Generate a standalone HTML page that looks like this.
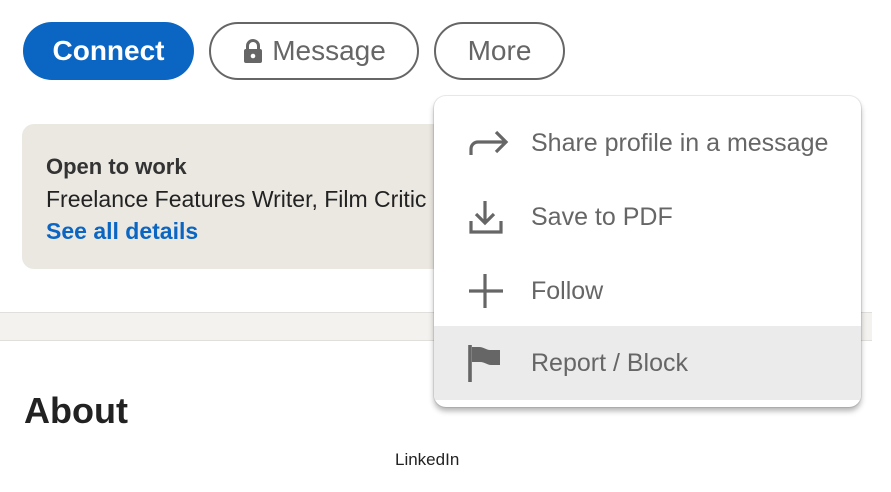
<!DOCTYPE html>
<html><head><meta charset="utf-8"><style>
*{margin:0;padding:0;box-sizing:border-box}
body{width:891px;height:492px;background:#fff;position:relative;overflow:hidden;font-family:"Liberation Sans",sans-serif}
.btn{position:absolute;top:22px;height:58px;border-radius:29px;font-size:28px;display:flex;align-items:center;justify-content:center}
.c{left:23px;width:171px;background:#0a66c2;color:#fff;font-weight:bold}
.m{left:209px;width:210px;border:2px solid #666;color:#666}
.mo{left:434px;width:131px;border:2px solid #666;color:#666}
.card{position:absolute;left:22px;top:124px;width:430px;height:145px;background:#ebe8e2;border-radius:12px;padding:27px 0 0 24px;font-size:23px;color:#222;line-height:32px;white-space:nowrap;overflow:hidden}
.band{position:absolute;left:0;top:312px;width:872px;height:29px;background:#f3f2ef;border-top:1px solid #e0dfdc;border-bottom:1px solid #e0dfdc}
.about{position:absolute;left:24px;top:390px;font-size:36px;font-weight:bold;color:#222}
.li{position:absolute;left:395px;top:450px;font-size:17px;color:#222}
.dd{position:absolute;left:434px;top:96px;width:427px;height:311px;background:#fff;border-radius:12px;box-shadow:0 4px 6px rgba(0,0,0,.3),0 0 0 1px rgba(0,0,0,.08);overflow:hidden}
.it{position:absolute;left:0;width:427px;height:74px;display:flex;align-items:center;font-size:25px;color:#666}
.it span{position:absolute;left:97px}
.it svg{position:absolute;left:34px}
</style></head><body>
<div class="btn c">Connect</div>
<div class="btn m"><svg width="22" height="26" viewBox="0 0 22 26" style="margin-right:8px"><path d="M5.5 12V8a5.5 5.5 0 0111 0v4" fill="none" stroke="#666" stroke-width="3"/><rect x="2" y="11" width="18" height="14" rx="2" fill="#666"/><circle cx="11" cy="18" r="2.3" fill="#fff"/></svg>Message</div>
<div class="btn mo">More</div>
<div class="card"><div style="font-weight:bold;color:#333;font-size:22px">Open to work</div><div>Freelance Features Writer, Film Critic</div><div style="color:#0a66c2;font-weight:bold">See all details</div></div>
<div class="band"></div>
<div class="about">About</div>
<div class="li">LinkedIn</div>
<div class="dd">
<div class="it" style="top:10px"><svg width="42" height="32" viewBox="0 0 42 32"><path d="M3 28v-6a7 7 0 017-7h28M28 5l10 10-10 10" fill="none" stroke="#666" stroke-width="3.2"/></svg><span>Share profile in a message</span></div>
<div class="it" style="top:84px"><svg width="36" height="36" viewBox="0 0 36 36"><path d="M17 2v22M8 15l9 9 9-9M3 22v11h30V22" fill="none" stroke="#666" stroke-width="3.2"/></svg><span>Save to PDF</span></div>
<div class="it" style="top:158px"><svg width="36" height="36" viewBox="0 0 36 36"><path d="M17 1v34M1 18h34" fill="none" stroke="#666" stroke-width="3.2"/></svg><span>Follow</span></div>
<div class="it" style="top:230px;height:74px;background:#ebebeb"><svg width="34" height="38" viewBox="0 0 34 38"><path d="M2 1v37" stroke="#666" stroke-width="3.6"/><path d="M4 3h7c5 0 7 3 11 3h10v15h-9c-4 0-6-3-11-3H4z" fill="#666"/></svg><span>Report / Block</span></div>
</div>
</body></html>
